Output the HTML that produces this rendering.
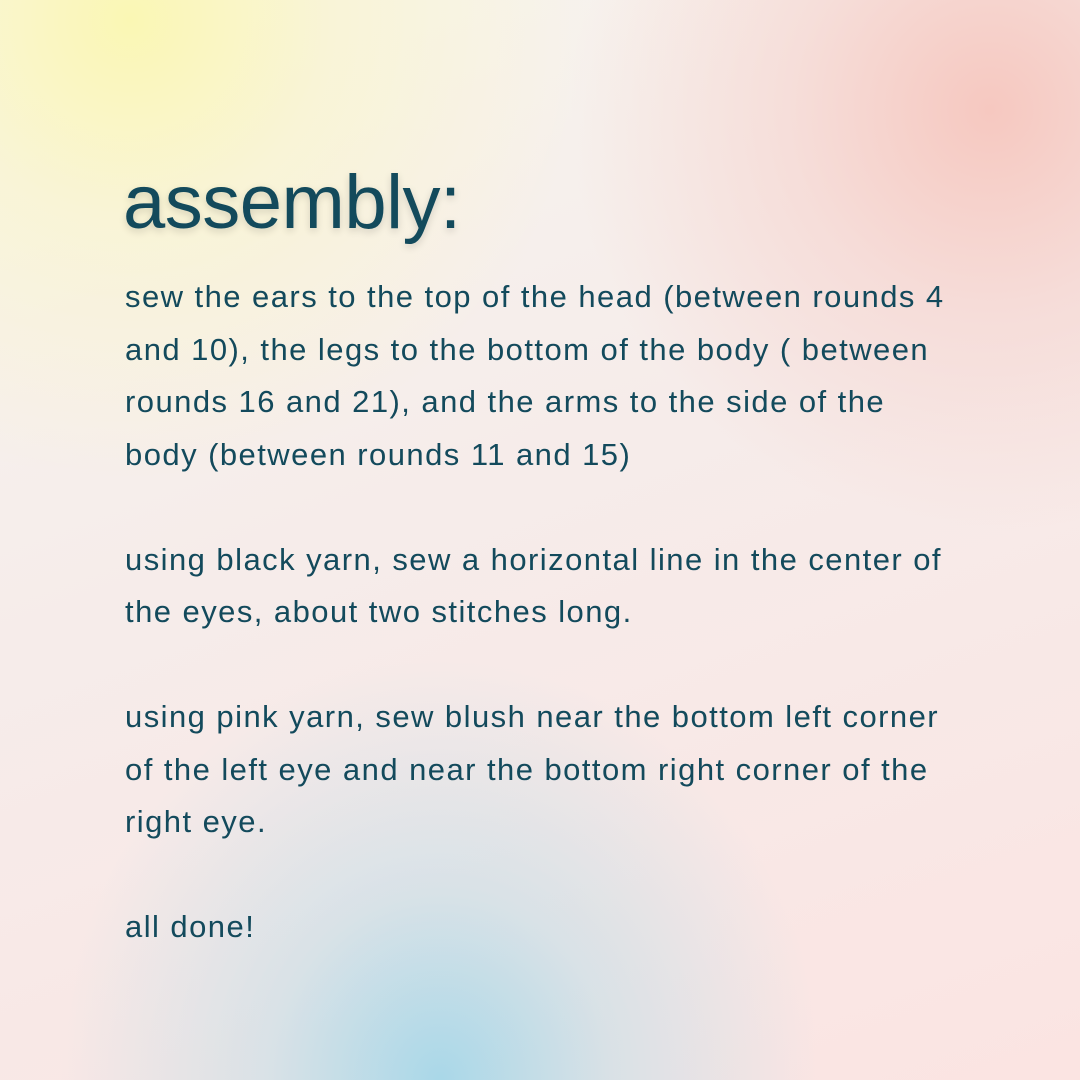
<!DOCTYPE html>
<html><head><meta charset="utf-8"><style>
html,body{margin:0;padding:0}
body{width:1080px;height:1080px;overflow:hidden;position:relative;
background:
radial-gradient(ellipse 380px 420px at 440px 1080px, rgba(165,215,232,0.95) 0, rgba(195,222,232,0.6) 45%, rgba(230,225,230,0) 100%),
radial-gradient(circle at 130px 20px, rgba(250,247,180,1) 0, rgba(250,245,205,0.7) 200px, rgba(250,245,230,0) 460px),
radial-gradient(circle at 990px 110px, rgba(246,200,192,1) 0, rgba(246,210,205,0.6) 200px, rgba(246,225,225,0) 420px),
linear-gradient(160deg,#f7f5ef 0%,#f6ecea 45%,#fbe4e2 100%);
font-family:"Liberation Sans",sans-serif;color:#134a5c}
h1{position:absolute;left:123px;top:158px;margin:0;font-weight:normal;font-size:76px;line-height:90px;text-shadow:0 3px 8px rgba(0,0,0,0.15);letter-spacing:-0.5px}
.t{position:absolute;left:125px;top:271px;font-size:31px;line-height:52.5px;white-space:nowrap;letter-spacing:1.45px}
</style></head><body>
<h1>assembly:</h1>
<div class="t">sew the ears to the top of the head (between rounds 4<br>and 10), the legs to the bottom of the body ( between<br>rounds 16 and 21), and the arms to the side of the<br>body (between rounds 11 and 15)<br><br>using black yarn, sew a horizontal line in the center of<br>the eyes, about two stitches long.<br><br>using pink yarn, sew blush near the bottom left corner<br>of the left eye and near the bottom right corner of the<br>right eye.<br><br>all done!</div>
</body></html>
